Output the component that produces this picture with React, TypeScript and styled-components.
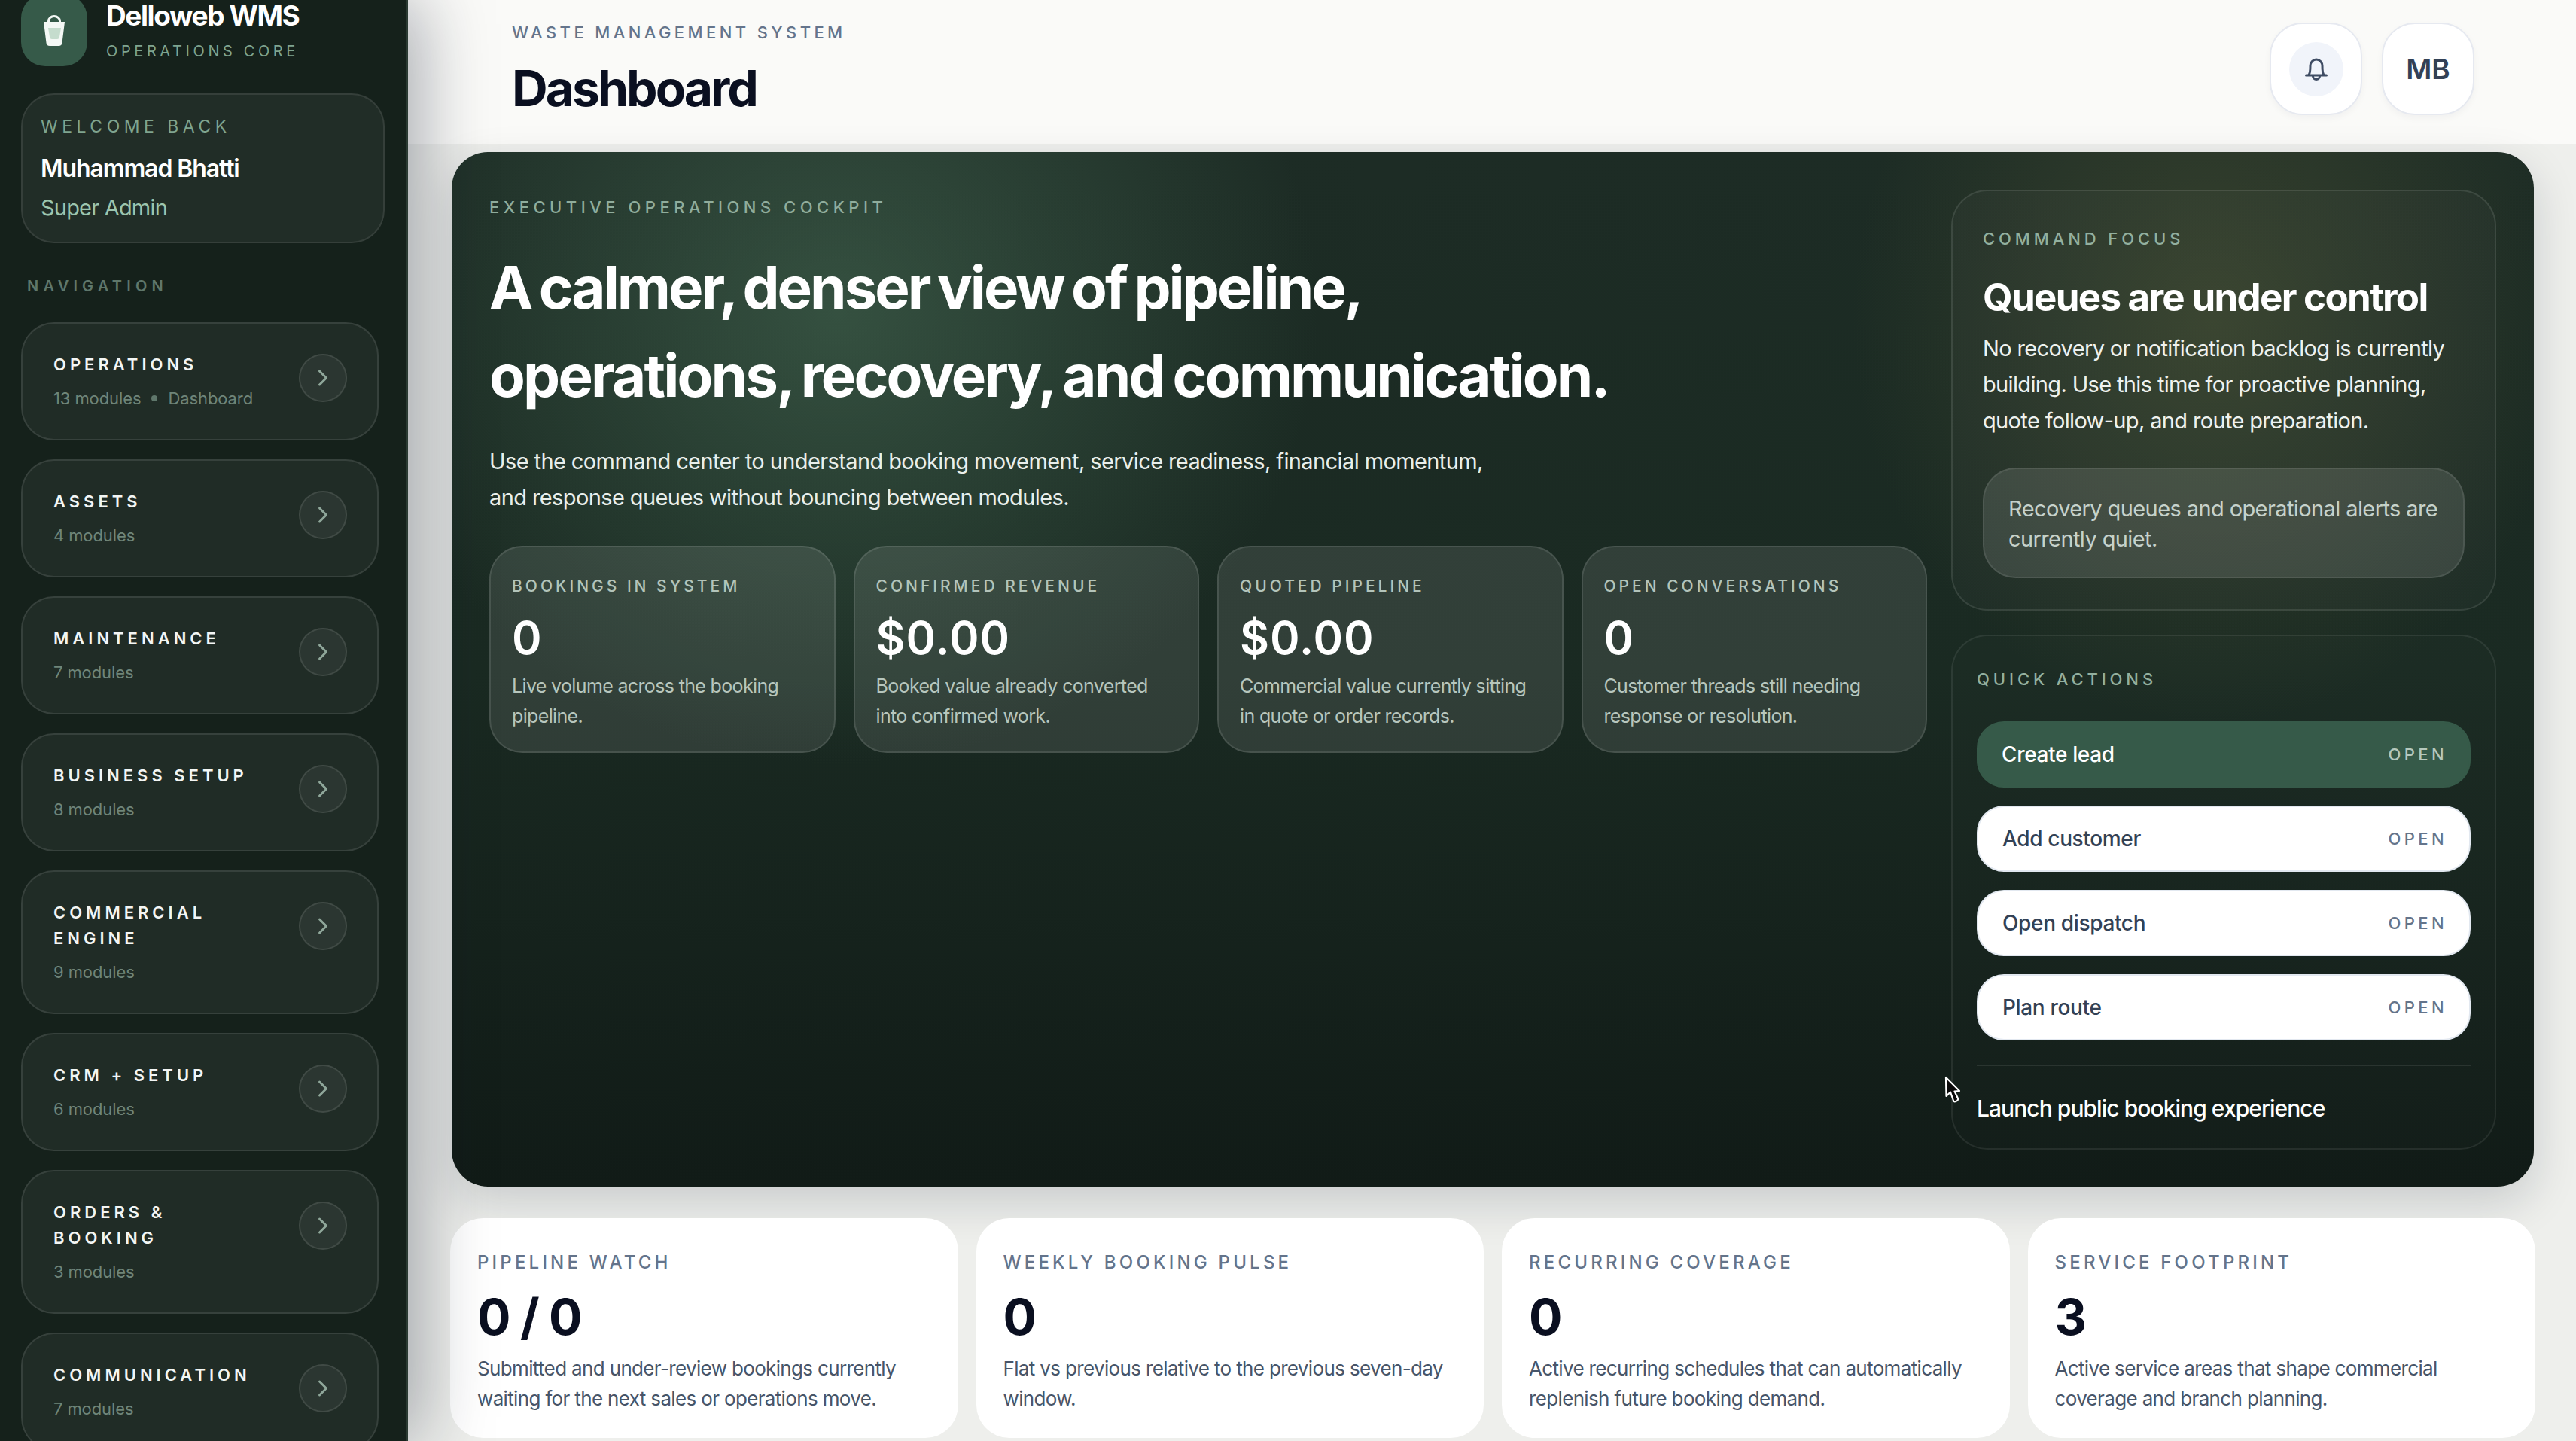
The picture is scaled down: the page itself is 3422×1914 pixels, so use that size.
import React from "react";
import styled, { createGlobalStyle } from "styled-components";
import { ChevronRight } from "lucide-react";

const Global = createGlobalStyle`
  html, body { margin: 0; padding: 0; height: 100%; overflow: hidden; background: #eeefec; }
  #root { height: 100%; }
  * { box-sizing: border-box; }
  body { font-family: Inter, "Liberation Sans", sans-serif; }
`;

const Shell = styled.div`
  position: relative;
  display: flex;
  height: 100vh;
  overflow: hidden;
  background: #eeefec;
`;

const Sidebar = styled.aside`
  position: relative;
  z-index: 2;
  flex: 0 0 542px;
  height: 100%;
  overflow: hidden;
  padding-left: 28px;
  background: #15211b;
  border-right: 2px solid #2a3a32;
  box-shadow: 14px 0 90px rgba(15, 23, 42, 0.36);
`;

const Brand = styled.div`
  display: flex;
  gap: 25px;
  height: 88px;
`;

const LogoTile = styled.div`
  flex: 0 0 88px;
  height: 96px;
  margin-top: -8px;
  border-radius: 32px;
  background: #365a49;
  display: flex;
  align-items: center;
  justify-content: center;
`;

const BrandText = styled.div`
  padding-top: 1px;
`;

const BrandTitle = styled.div`
  font-size: 37px;
  line-height: 40px;
  font-weight: 700;
  letter-spacing: -1.4px;
  color: #fff;
`;

const BrandSub = styled.div`
  margin-top: 15px;
  font-size: 20px;
  line-height: 24px;
  letter-spacing: 4.6px;
  color: #7fa48f;
  white-space: nowrap;
`;

const WelcomeCard = styled.div`
  width: 483px;
  margin-top: 36px;
  padding: 30px 24px 27px;
  border-radius: 44px;
  border: 2px solid rgba(255, 255, 255, 0.09);
  background: rgba(255, 255, 255, 0.055);
`;

const WelcomeLabel = styled.div`
  font-size: 23px;
  line-height: 24px;
  letter-spacing: 5.5px;
  color: #7fa48f;
`;

const WelcomeName = styled.div`
  margin-top: 24px;
  font-size: 32px;
  line-height: 40px;
  font-weight: 600;
  letter-spacing: -1.1px;
  color: #fff;
`;

const WelcomeRole = styled.div`
  margin-top: 14px;
  font-size: 29px;
  line-height: 36px;
  letter-spacing: -0.8px;
  color: #9cc5ae;
`;

const NavHeading = styled.div`
  margin: 45px 0 36px 8px;
  font-size: 20px;
  line-height: 24px;
  font-weight: 600;
  letter-spacing: 6.2px;
  color: #5f776b;
`;

const NavList = styled.nav`
  width: 475px;
  display: flex;
  flex-direction: column;
  gap: 25px;
`;

const NavCard = styled.div`
  display: flex;
  justify-content: space-between;
  align-items: flex-start;
  padding: 37px 40px 39px 41px;
  border-radius: 44px;
  border: 2px solid rgba(255, 255, 255, 0.1);
  background: rgba(255, 255, 255, 0.05);
`;

const NavBody = styled.div`
  width: 290px;
`;

const NavTitle = styled.div`
  font-size: 22px;
  line-height: 34px;
  font-weight: 600;
  letter-spacing: 5px;
  color: #f3f6f4;
`;

const NavMeta = styled.div`
  margin-top: 13px;
  display: flex;
  align-items: center;
  gap: 14px;
  font-size: 22px;
  line-height: 30px;
  letter-spacing: -0.1px;
  color: #6f8579;
`;

const MetaDot = styled.span`
  width: 8px;
  height: 8px;
  border-radius: 50%;
  background: #5f776b;
`;

const NavChevron = styled.div`
  flex: 0 0 64px;
  width: 64px;
  height: 64px;
  margin-top: 3px;
  border-radius: 50%;
  display: flex;
  align-items: center;
  justify-content: center;
  border: 2px solid rgba(255, 255, 255, 0.1);
  background: rgba(255, 255, 255, 0.05);
  color: #8fa79a;
`;

const Main = styled.main`
  flex: 1;
  min-width: 0;
  display: flex;
  flex-direction: column;
  overflow: hidden;
`;

const TopBar = styled.header`
  flex: 0 0 191px;
  display: flex;
  justify-content: space-between;
  padding: 30px 135px 0 138px;
  background: #fafaf8;
`;

const TopEyebrow = styled.div`
  margin-top: 1px;
  font-size: 22px;
  line-height: 24px;
  font-weight: 500;
  letter-spacing: 4.4px;
  color: #64748b;
`;

const PageTitle = styled.h1`
  margin: 24px 0 0;
  font-size: 66px;
  line-height: 76px;
  font-weight: 700;
  letter-spacing: -3px;
  color: #0a0f20;
`;

const TopActions = styled.div`
  display: flex;
  gap: 26px;
`;

const SquareButton = styled.div`
  width: 123px;
  height: 123px;
  border-radius: 44px;
  background: #fff;
  border: 2px solid #e6e9f0;
  box-shadow: 0 4px 10px rgba(15, 23, 42, 0.04);
  display: flex;
  align-items: center;
  justify-content: center;
  font-size: 37px;
  font-weight: 600;
  color: #334155;
`;

const BellDisc = styled.div`
  width: 72px;
  height: 72px;
  border-radius: 50%;
  background: #f1f4fa;
  display: flex;
  align-items: center;
  justify-content: center;
`;

const Content = styled.div`
  padding: 11px 56px 0 58px;
`;

const Hero = styled.section`
  display: grid;
  grid-template-columns: 1fr 724px;
  gap: 32px;
  height: 1374px;
  padding: 50px 50px 48px;
  border-radius: 48px;
  color: #fff;
  background:
    radial-gradient(ellipse 640px 600px at 513px 214px, rgba(74, 112, 88, 0.54), transparent 100%),
    radial-gradient(ellipse 480px 540px at 2340px 220px, rgba(92, 96, 58, 0.42), transparent 100%),
    linear-gradient(180deg, #1d2c25 0%, #1a2a22 50%, #111b17 100%);
  box-shadow: 0 22px 60px rgba(15, 23, 42, 0.16);
`;

const HeroLeft = styled.div`
  min-width: 0;
`;

const HeroEyebrow = styled.div`
  margin-top: 11px;
  font-size: 22px;
  line-height: 24px;
  font-weight: 500;
  letter-spacing: 5.5px;
  color: #90ad9c;
`;

const HeroTitle = styled.h2`
  margin: 36px 0 0;
  font-size: 78px;
  line-height: 117px;
  font-weight: 700;
  color: #fff;
`;

const HeroTitleLine = styled.span<{ $tracking: number; $wordGap: number }>`
  display: block;
  white-space: nowrap;
  letter-spacing: ${(p) => p.$tracking}px;
  word-spacing: ${(p) => p.$wordGap}px;
`;

const HeroCopy = styled.p`
  margin: 32px 0 0;
  font-size: 29px;
  line-height: 48px;
  letter-spacing: -0.6px;
  color: #e9efeb;
`;

const StatRow = styled.div`
  margin-top: 40px;
  display: grid;
  grid-template-columns: repeat(4, 1fr);
  gap: 24px;
`;

const StatCard = styled.div`
  height: 275px;
  padding: 40px 38px 0 28px;
  border-radius: 44px;
  border: 2px solid rgba(255, 255, 255, 0.11);
  background: rgba(255, 255, 255, 0.1);
`;

const StatLabel = styled.div`
  font-size: 21px;
  line-height: 24px;
  font-weight: 500;
  letter-spacing: 4px;
  color: #b3c4ba;
  white-space: nowrap;
`;

const StatValue = styled.div`
  margin-top: 21px;
  font-size: 60px;
  line-height: 70px;
  font-weight: 600;
  letter-spacing: 1px;
  color: #fff;
`;

const StatNote = styled.div`
  margin-top: 9px;
  font-size: 25px;
  line-height: 40px;
  letter-spacing: -0.65px;
  color: #b7c6bd;
`;

const HeroRight = styled.div`
  display: flex;
  flex-direction: column;
  gap: 32px;
`;

const FocusCard = styled.div`
  height: 559px;
  padding: 51px 40px 0 40px;
  border-radius: 48px;
  border: 2px solid rgba(255, 255, 255, 0.1);
  background: rgba(255, 255, 255, 0.025);
`;

const PanelLabel = styled.div`
  font-size: 22px;
  line-height: 24px;
  font-weight: 500;
  letter-spacing: 4.9px;
  color: #93b09f;
`;

const FocusTitle = styled.div`
  margin-top: 36px;
  font-size: 51px;
  line-height: 60px;
  font-weight: 700;
  letter-spacing: -1.7px;
  color: #fff;
  white-space: nowrap;
`;

const FocusCopy = styled.p`
  margin: 14px 0 0;
  font-size: 29px;
  line-height: 48px;
  letter-spacing: -0.65px;
  color: #eef2ef;
`;

const FocusAlert = styled.div`
  margin-top: 38px;
  height: 147px;
  padding: 33px 20px 0 32px;
  border-radius: 44px;
  border: 2px solid rgba(255, 255, 255, 0.09);
  background: rgba(255, 255, 255, 0.11);
  font-size: 29px;
  line-height: 40px;
  letter-spacing: -0.6px;
  color: #c6d2cb;
`;

const ActionsCard = styled.div`
  height: 684px;
  padding: 45px 32px 0;
  border-radius: 48px;
  border: 2px solid rgba(255, 255, 255, 0.08);
  background: rgba(255, 255, 255, 0.01);
`;

const ActionList = styled.div`
  margin-top: 44px;
  display: flex;
  flex-direction: column;
  gap: 24px;
`;

const ActionRow = styled.div<{ $primary?: boolean }>`
  height: 88px;
  padding: 0 33px 0 ${(p) => (p.$primary ? 31 : 32)}px;
  display: flex;
  align-items: center;
  justify-content: space-between;
  border-radius: 36px;
  border: 2px solid ${(p) => (p.$primary ? "#365a49" : "#e2e8f0")};
  background: ${(p) => (p.$primary ? "#365a49" : "#fff")};
`;

const ActionName = styled.span<{ $primary?: boolean }>`
  font-size: 28px;
  font-weight: 500;
  letter-spacing: -0.35px;
  color: ${(p) => (p.$primary ? "#fff" : "#334155")};
`;

const ActionTag = styled.span<{ $primary?: boolean }>`
  font-size: 22px;
  font-weight: 500;
  letter-spacing: 4.4px;
  margin-right: -4px;
  color: ${(p) => (p.$primary ? "#b6c8bd" : "#64748b")};
`;

const ActionDivider = styled.div`
  margin-top: 32px;
  height: 2px;
  background: rgba(255, 255, 255, 0.09);
`;

const LaunchLink = styled.div`
  margin-top: 36px;
  font-size: 30px;
  line-height: 40px;
  font-weight: 500;
  letter-spacing: -0.95px;
  color: #fff;
`;

const SummaryRow = styled.div`
  margin: 42px -2px 0 -2px;
  display: grid;
  grid-template-columns: repeat(4, 1fr);
  gap: 24px;
`;

const SummaryCard = styled.div`
  height: 292px;
  padding: 45px 30px 0 36px;
  border-radius: 44px;
  background: #fff;
`;

const SummaryLabel = styled.div`
  font-size: 24px;
  line-height: 28px;
  font-weight: 500;
  letter-spacing: 4.2px;
  color: #64748b;
  white-space: nowrap;
`;

const SummaryValue = styled.div`
  margin-top: 22px;
  font-size: 66px;
  line-height: 72px;
  font-weight: 700;
  letter-spacing: 1.4px;
  word-spacing: -6px;
  color: #0a0f20;
`;

const SummaryNote = styled.div`
  margin-top: 13px;
  font-size: 26px;
  line-height: 40px;
  letter-spacing: -0.65px;
  color: #475569;
`;

const Pointer = styled.svg`
  position: absolute;
  left: 2582px;
  top: 1428px;
  z-index: 3;
`;

const LogoIcon = () => (
  <svg width="30" height="43" viewBox="0 0 30 43" fill="none">
    <path d="M7.5 11 V9 A7.5 6.5 0 0 1 22.5 9 V11" stroke="#f4f8f5" strokeWidth="3" />
    <path d="M1 10 H29 L25.5 38 Q25 42 21 42 H9 Q5 42 4.5 38 Z" fill="#f4f8f5" />
    <path d="M7 18 H24 L22 30 Q21.5 33 19 33 H12 Q9.5 33 9 30 Z" fill="#c5dccd" />
  </svg>
);

const BellIcon = () => (
  <svg width="30" height="30" viewBox="0 0 30 30" fill="none" stroke="#3f4c63" strokeWidth="3" strokeLinecap="round">
    <path d="M1.5 23 H28.5" />
    <path d="M5 22.5 C6.5 20.5 7 18 7 10.5 A8 8.5 0 0 1 23 10.5 C23 18 23.5 20.5 25 22.5" />
    <path d="M10.5 24 A4.5 4.5 0 0 0 19.5 24" />
  </svg>
);

type NavEntry = { title: string; count: string; current?: string };

const navEntries: NavEntry[] = [
  { title: "OPERATIONS", count: "13 modules", current: "Dashboard" },
  { title: "ASSETS", count: "4 modules" },
  { title: "MAINTENANCE", count: "7 modules" },
  { title: "BUSINESS SETUP", count: "8 modules" },
  { title: "COMMERCIAL ENGINE", count: "9 modules" },
  { title: "CRM + SETUP", count: "6 modules" },
  { title: "ORDERS & BOOKING", count: "3 modules" },
  { title: "COMMUNICATION", count: "7 modules" },
];

const stats = [
  { label: "BOOKINGS IN SYSTEM", value: "0", note: "Live volume across the booking pipeline." },
  { label: "CONFIRMED REVENUE", value: "$0.00", note: "Booked value already converted into confirmed work." },
  { label: "QUOTED PIPELINE", value: "$0.00", note: "Commercial value currently sitting in quote or order records." },
  { label: "OPEN CONVERSATIONS", value: "0", note: "Customer threads still needing response or resolution." },
];

const actions = [
  { name: "Create lead", primary: true },
  { name: "Add customer" },
  { name: "Open dispatch" },
  { name: "Plan route" },
];

const summaries = [
  { label: "PIPELINE WATCH", value: "0 / 0", note: "Submitted and under-review bookings currently waiting for the next sales or operations move." },
  { label: "WEEKLY BOOKING PULSE", value: "0", note: "Flat vs previous relative to the previous seven-day window." },
  { label: "RECURRING COVERAGE", value: "0", note: "Active recurring schedules that can automatically replenish future booking demand." },
  { label: "SERVICE FOOTPRINT", value: "3", note: "Active service areas that shape commercial coverage and branch planning." },
];

export default function App() {
  return (
    <Shell>
      <Global />
      <Sidebar>
        <Brand>
          <LogoTile>
            <LogoIcon />
          </LogoTile>
          <BrandText>
            <BrandTitle>Delloweb WMS</BrandTitle>
            <BrandSub>OPERATIONS CORE</BrandSub>
          </BrandText>
        </Brand>
        <WelcomeCard>
          <WelcomeLabel>WELCOME BACK</WelcomeLabel>
          <WelcomeName>Muhammad Bhatti</WelcomeName>
          <WelcomeRole>Super Admin</WelcomeRole>
        </WelcomeCard>
        <NavHeading>NAVIGATION</NavHeading>
        <NavList>
          {navEntries.map((n) => (
            <NavCard key={n.title}>
              <NavBody>
                <NavTitle>{n.title}</NavTitle>
                <NavMeta>
                  <span>{n.count}</span>
                  {n.current && <MetaDot />}
                  {n.current && <span>{n.current}</span>}
                </NavMeta>
              </NavBody>
              <NavChevron>
                <ChevronRight size={36} strokeWidth={2} />
              </NavChevron>
            </NavCard>
          ))}
        </NavList>
      </Sidebar>
      <Main>
        <TopBar>
          <div>
            <TopEyebrow>WASTE MANAGEMENT SYSTEM</TopEyebrow>
            <PageTitle>Dashboard</PageTitle>
          </div>
          <TopActions>
            <SquareButton>
              <BellDisc>
                <BellIcon />
              </BellDisc>
            </SquareButton>
            <SquareButton>MB</SquareButton>
          </TopActions>
        </TopBar>
        <Content>
          <Hero>
            <HeroLeft>
              <HeroEyebrow>EXECUTIVE OPERATIONS COCKPIT</HeroEyebrow>
              <HeroTitle>
                <HeroTitleLine $tracking={-3} $wordGap={-5}>
                  A calmer, denser view of pipeline,
                </HeroTitleLine>
                <HeroTitleLine $tracking={-2.8} $wordGap={-4}>
                  operations, recovery, and communication.
                </HeroTitleLine>
              </HeroTitle>
              <HeroCopy>
                Use the command center to understand booking movement, service readiness, financial momentum,
                <br />
                and response queues without bouncing between modules.
              </HeroCopy>
              <StatRow>
                {stats.map((s) => (
                  <StatCard key={s.label}>
                    <StatLabel>{s.label}</StatLabel>
                    <StatValue>{s.value}</StatValue>
                    <StatNote>{s.note}</StatNote>
                  </StatCard>
                ))}
              </StatRow>
            </HeroLeft>
            <HeroRight>
              <FocusCard>
                <PanelLabel>COMMAND FOCUS</PanelLabel>
                <FocusTitle>Queues are under control</FocusTitle>
                <FocusCopy>
                  No recovery or notification backlog is currently building. Use this time for proactive planning,
                  quote follow-up, and route preparation.
                </FocusCopy>
                <FocusAlert>Recovery queues and operational alerts are currently quiet.</FocusAlert>
              </FocusCard>
              <ActionsCard>
                <PanelLabel>QUICK ACTIONS</PanelLabel>
                <ActionList>
                  {actions.map((a) => (
                    <ActionRow key={a.name} $primary={a.primary}>
                      <ActionName $primary={a.primary}>{a.name}</ActionName>
                      <ActionTag $primary={a.primary}>OPEN</ActionTag>
                    </ActionRow>
                  ))}
                </ActionList>
                <ActionDivider />
                <LaunchLink>Launch public booking experience</LaunchLink>
              </ActionsCard>
            </HeroRight>
          </Hero>
          <SummaryRow>
            {summaries.map((s) => (
              <SummaryCard key={s.label}>
                <SummaryLabel>{s.label}</SummaryLabel>
                <SummaryValue>{s.value}</SummaryValue>
                <SummaryNote>{s.note}</SummaryNote>
              </SummaryCard>
            ))}
          </SummaryRow>
        </Content>
      </Main>
      <Pointer width="24" height="40" viewBox="0 0 24 40">
        <path
          d="M3 3 L3.5 28 L9 22.5 L13 34 Q14 36 16 35 L18 34 Q19.5 33 19 31 L14.5 21.5 L21 21 Z"
          fill="#0a0a0a"
          stroke="#fff"
          strokeWidth="2.2"
          strokeLinejoin="round"
        />
      </Pointer>
    </Shell>
  );
}
